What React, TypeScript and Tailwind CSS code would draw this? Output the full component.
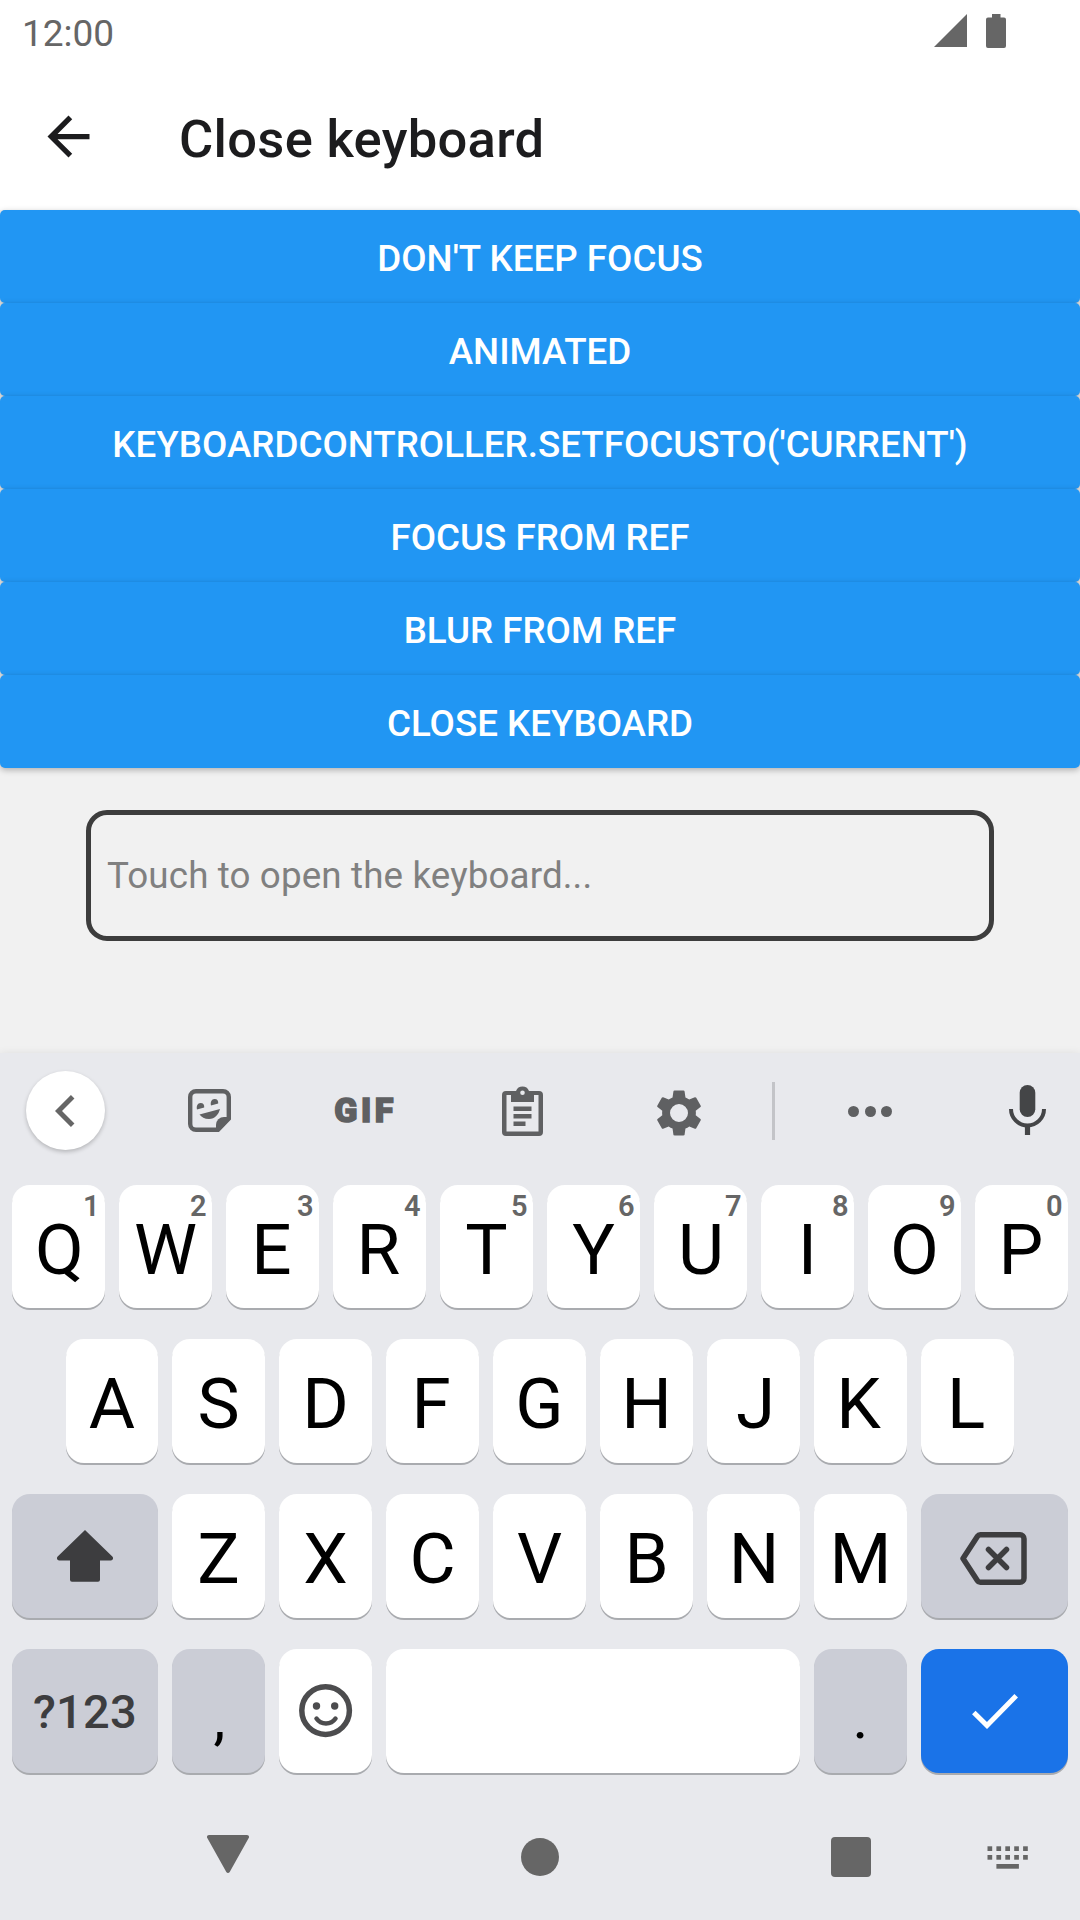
import React from "react";

const ACTIONS = [
  "DON'T KEEP FOCUS",
  "ANIMATED",
  "KEYBOARDCONTROLLER.SETFOCUSTO('CURRENT')",
  "FOCUS FROM REF",
  "BLUR FROM REF",
  "CLOSE KEYBOARD",
];

const NUDGE: Record<string, string> = {
  E: "pr-[2px]",
  R: "pr-[2px]",
  F: "pr-[3px]",
  L: "pr-[3px]",
  P: "pr-[1px]",
  K: "pr-[4px]",
  Q: "pl-[2px]",
  U: "pl-[1px]",
  N: "pl-[1px]",
  J: "pl-[4px]",
};

type KeyProps = { className?: string; hint?: string; children?: React.ReactNode };

function Key({ className = "w-[93px] bg-white", hint, children }: KeyProps) {
  return (
    <div
      className={`relative flex h-full shrink-0 items-center justify-center rounded-[18px] text-[71px] leading-none text-black shadow-[0_2px_0_#a9abaf] ${className}`}
    >
      {hint && (
        <span className="absolute right-[5.5px] top-[10px] text-[29px] font-semibold leading-[22px] text-[#666666]">
          {hint}
        </span>
      )}
      {children}
    </div>
  );
}

function Letter({ char, hint, className }: { char: string; hint?: string; className?: string }) {
  return (
    <Key hint={hint} className={className}>
      <span className={`mt-[6px] leading-[56px] ${NUDGE[char] ?? ""}`}>{char}</span>
    </Key>
  );
}

function StatusBar() {
  return (
    <div className="flex h-[63px] items-start pl-[22px] pr-[74px]">
      <span className="pt-[12px] text-[37px] leading-[43px] text-[#666666]">12:00</span>
      <svg className="ml-auto mt-[14px] h-[33px] w-[33px]" viewBox="0 0 33 33" fill="#666666">
        <path d="M33 0V33H0z" />
      </svg>
      <svg className="ml-[19px] mt-[14px] h-[34px] w-[20px]" viewBox="0 0 20 34" fill="#666666">
        <path d="M6 0h8.500v3.500H18a2 2 0 0 1 2 2V32a2 2 0 0 1-2 2H2a2 2 0 0 1-2-2V5.500a2 2 0 0 1 2-2h4z" />
      </svg>
    </div>
  );
}

function Header() {
  return (
    <div className="flex h-[147px] items-center pl-[37px]">
      <svg className="h-[63px] w-[63px]" viewBox="0 0 24 24" fill="#1c1c1e">
        <path d="M20 11H7.830l5.590-5.590L12 4l-8 8 8 8 1.410-1.410L7.830 13H20z" />
      </svg>
      <h1 className="ml-[79px] mt-[4px] text-[52.5px] font-medium leading-[62px] tracking-[0.3px] text-[#1c1c1e]">
        Close keyboard
      </h1>
    </div>
  );
}

function Toolbar() {
  return (
    <div className="grid h-[132px] grid-cols-[131px_157px_152px_164px_150px_39px_154px_133px] items-start">
      <div className="mt-[18px] flex h-[79px] w-[79px] items-center justify-center justify-self-center rounded-full bg-white pr-[2px] shadow-[0_2px_4px_rgba(0,0,0,0.22)]">
        <svg className="h-[32px] w-[20px]" viewBox="0 0 20 32" fill="none" stroke="#666666" strokeWidth="5">
          <path d="M17.700 1.800 3.500 16l14.200 14.200" />
        </svg>
      </div>
      <svg className="mt-[36px] h-[43px] w-[43px] justify-self-center" viewBox="0 0 43 43" fill="#5f6062">
        <path
          d="M8 2.200h27a5.800 5.800 0 0 1 5.800 5.800v21.500L30 40.800H8A5.800 5.800 0 0 1 2.200 35V8A5.800 5.800 0 0 1 8 2.200z"
          fill="none"
          stroke="#5f6062"
          strokeWidth="4.400"
        />
        <path d="M28 42V36a8 8 0 0 1 8-8h6z" />
        <path d="M11.500 25.500 32 20c-1.500 5.500-5 10-11 10-4.500 0-7.500-1.800-9.500-4.500z" />
        <path d="M9 20.500c-.8-3.500.6-6.500 3.500-6.500s4 2 3.700 4.500zM23 16.500c-.8-3.500.6-6.500 3.500-6.500s4 2 3.700 4.500z" />
      </svg>
      <span className="mt-[40px] justify-self-center pl-[3px] text-[34px] font-black leading-[34px] tracking-[3.5px] text-[#5f6062] [-webkit-text-stroke:1.5px_#5f6062]">
        GIF
      </span>
      <svg className="mt-[33px] h-[50px] w-[41px] justify-self-center" viewBox="0 0 41 50" fill="#5f6062">
        <path
          fillRule="evenodd"
          d="M4 5h10a7 7 0 0 1 13 0h10a4 4 0 0 1 4 4v37a4 4 0 0 1-4 4H4a4 4 0 0 1-4-4V9a4 4 0 0 1 4-4zM4.500 9v36.500h32V9H32v7H9V9zM20.500 4.500a2.300 2.300 0 1 0 0 4.600 2.300 2.300 0 0 0 0-4.600z"
        />
        <path d="M11.500 20.500h18v4.500h-18zM11.500 28h18v4.500h-18zM11.500 35.500h12V40h-12z" />
      </svg>
      <svg className="mt-[33px] h-[54px] w-[54px] justify-self-center" viewBox="0 0 24 24" fill="#5f6062">
        <path
          fillRule="evenodd"
          d="M19.430 12.980c.04-.32.07-.64.07-.98s-.03-.66-.07-.98l2.110-1.650c.19-.15.24-.42.12-.64l-2-3.460c-.12-.22-.39-.3-.61-.22l-2.490 1c-.52-.4-1.080-.73-1.690-.98l-.38-2.650C14.460 2.180 14.250 2 14 2h-4c-.25 0-.46.18-.49.42l-.38 2.650c-.61.25-1.170.59-1.690.98l-2.490-1c-.23-.09-.49 0-.61.22l-2 3.460c-.13.22-.07.49.12.64l2.110 1.650c-.04.32-.07.65-.07.98s.03.66.07.98l-2.110 1.650c-.19.15-.24.42-.12.64l2 3.460c.12.22.39.3.61.22l2.490-1c.52.4 1.080.73 1.690.98l.38 2.650c.03.24.24.42.49.42h4c.25 0 .46-.18.49-.42l.38-2.650c.61-.25 1.170-.59 1.690-.98l2.490 1c.23.09.49 0 .61-.22l2-3.460c.12-.22.07-.49-.12-.64zM12 16a4 4 0 1 1 0-8 4 4 0 0 1 0 8z"
        />
      </svg>
      <div className="mt-[29px] h-[58px] w-[3px] justify-self-center bg-[#c3c4c8]" />
      <div className="mt-[53px] flex gap-[5.500px] justify-self-center">
        <i className="h-[11px] w-[11px] rounded-full bg-[#5f6062]" />
        <i className="h-[11px] w-[11px] rounded-full bg-[#5f6062]" />
        <i className="h-[11px] w-[11px] rounded-full bg-[#5f6062]" />
      </div>
      <svg className="ml-[62px] mt-[32px] h-[50px] w-[37px]" viewBox="0 0 37 50" fill="#444547">
        <rect x="10.700" y="0" width="15.600" height="32" rx="7.800" />
        <path d="M2 24a16.500 16.500 0 0 0 33 0" fill="none" stroke="#444547" strokeWidth="4" />
        <path d="M18.500 40v10" stroke="#444547" strokeWidth="5.200" />
      </svg>
    </div>
  );
}

function Keyboard() {
  return (
    <div className="h-[867px] bg-[#e8e9ed] shadow-[0_0_8px_rgba(0,0,0,0.08)]">
      <Toolbar />
      <div className="flex h-[123px] gap-[14px] pl-[12px]">
        {"QWERTYUIOP".split("").map((c, i) => (
          <Letter key={c} char={c} hint={String((i + 1) % 10)} />
        ))}
      </div>
      <div className="mt-[31px] flex h-[124px] gap-[14px] pl-[66px]">
        {"ASDFGHJKL".split("").map((c) => (
          <Letter key={c} char={c} className={c === "A" ? "w-[92px] bg-white" : "w-[93px] bg-white"} />
        ))}
      </div>
      <div className="mt-[31px] flex h-[124px] gap-[14px] pl-[12px]">
        <Key className="w-[146px] bg-[#cbcdd6]">
          <svg className="h-[52px] w-[56px]" viewBox="0 0 56 52" fill="#3d3d3f">
            <path d="M28 0 55.300 26.500c1.500 1.500.7 3.900-1.500 3.900H43v19.400a2 2 0 0 1-2 2H15a2 2 0 0 1-2-2V30.400H2.200C0 30.400-.8 28 .7 26.500z" />
          </svg>
        </Key>
        {"ZXCVBNM".split("").map((c) => (
          <Letter key={c} char={c} />
        ))}
        <Key className="w-[147px] bg-[#cbcdd6]">
          <svg
            className="ml-[-2px] mt-[5px] h-[53px] w-[67px]"
            viewBox="0 0 67 53"
            fill="none"
            stroke="#3d3d3f"
            strokeWidth="5.500"
            strokeLinecap="round"
            strokeLinejoin="round"
          >
            <path d="M20.500 2.750H60a4 4 0 0 1 4 4v39.500a4 4 0 0 1-4 4H20.500a3.500 3.500 0 0 1-3-1.600L3 26.500 17.500 4.350a3.500 3.500 0 0 1 3-1.600z" />
            <path d="M28.500 17.500l18 18M46.500 17.500l-18 18" />
          </svg>
        </Key>
      </div>
      <div className="mt-[31px] flex h-[124px] gap-[14px] pl-[12px]">
        <Key className="w-[146px] bg-[#cbcdd6]">
          <span className="text-[47px] font-medium tracking-[0.3px] text-[#3d3d3f]">?123</span>
        </Key>
        <Key className="w-[93px] bg-[#cbcdd6]">
          <span className="pl-[2px] pt-[14px] text-[60px]">,</span>
        </Key>
        <Key>
          <svg className="h-[54px] w-[54px]" viewBox="0 0 54 54" fill="none" stroke="#4c4c4e" strokeWidth="5.500">
            <circle cx="26.600" cy="26.600" r="23.800" />
            <path d="M17.500 34.500c4.500 6.500 14.500 6.500 19 0" strokeWidth="4.500" strokeLinecap="round" />
            <circle cx="17.500" cy="22" r="3.700" fill="#4c4c4e" stroke="none" />
            <circle cx="35.700" cy="22" r="3.700" fill="#4c4c4e" stroke="none" />
          </svg>
        </Key>
        <Key className="w-[414px] bg-white" />
        <Key className="w-[93px] bg-[#cbcdd6]">
          <span className="pt-[14px] text-[60px]">.</span>
        </Key>
        <Key className="w-[147px] bg-[#1a73e8]">
          <svg className="h-[35px] w-[46px]" viewBox="0 0 46 35" fill="none" stroke="#ffffff" strokeWidth="5">
            <path d="M1.800 18.500 15 31.500 44.200 1.800" />
          </svg>
        </Key>
      </div>
      <div className="flex h-[147px] items-start pl-[207px] pt-[62px]">
        <svg className="h-[38px] w-[42px]" viewBox="0 0 42 38" fill="#666666">
          <path d="M2 0h38c1.700 0 2.500 1.700 1.700 3L22.700 37c-.8 1.300-2.600 1.300-3.400 0L.3 3C-.5 1.700.3 0 2 0z" />
        </svg>
        <div className="ml-[272px] mt-[3px] h-[38px] w-[38px] rounded-full bg-[#666666]" />
        <div className="ml-[272px] mt-[2px] h-[40px] w-[40px] rounded-[4px] bg-[#666666]" />
        <svg className="ml-[116px] mt-[11px] h-[24px] w-[42px]" viewBox="0 0 42 24" fill="#666666">
          {[0, 1, 2, 3, 4].map((i) => (
            <React.Fragment key={i}>
              <rect x={0.5 + i * 8.9} y="0.300" width="4.700" height="4.700" />
              <rect x={0.5 + i * 8.9} y="9" width="4.700" height="4.700" />
            </React.Fragment>
          ))}
          <rect x="9.400" y="18" width="22.500" height="4.700" />
        </svg>
      </div>
    </div>
  );
}

export default function App() {
  return (
    <div className="flex h-[1920px] w-[1080px] flex-col overflow-hidden bg-[#f1f1f1] font-['Roboto',sans-serif]">
      <div className="bg-white">
        <StatusBar />
        <Header />
      </div>
      <div className="flex flex-col">
        {ACTIONS.map((label) => (
          <button
            key={label}
            className="flex h-[93px] items-center justify-center rounded-[5px] bg-[#2196f3] pt-[5px] text-[36.75px] font-medium leading-none text-white shadow-[0_2px_6px_rgba(0,0,0,0.28)]"
          >
            {label}
          </button>
        ))}
      </div>
      <div className="flex-1 px-[86px] pt-[42px]">
        <div className="flex h-[131px] items-center rounded-[21px] border-[5px] border-[#3d3d3d] pl-[16px] text-[36.75px] tracking-[0.13px] text-[#808080]">
          Touch to open the keyboard...
        </div>
      </div>
      <Keyboard />
    </div>
  );
}
